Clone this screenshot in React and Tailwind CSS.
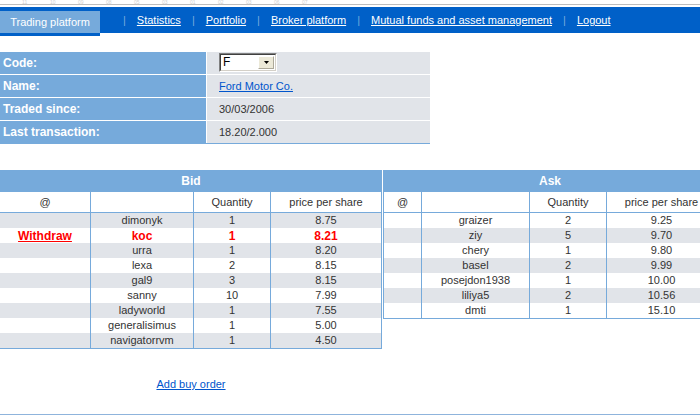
import React from "react";

const BLUE = "bg-[#0060c8]";

const navLinks = ["Statistics", "Portfolio", "Broker platform", "Mutual funds and asset management", "Logout"];

const ruler = ["11", "10", "09", "08", "05", "03", "01", "02", "03", "06", "07"];

const bids = [
  { user: "dimonyk", qty: "1", price: "8.75" },
  { user: "koc", qty: "1", price: "8.21", mine: true },
  { user: "urra", qty: "1", price: "8.20" },
  { user: "lexa", qty: "2", price: "8.15" },
  { user: "gal9", qty: "3", price: "8.15" },
  { user: "sanny", qty: "10", price: "7.99" },
  { user: "ladyworld", qty: "1", price: "7.55" },
  { user: "generalisimus", qty: "1", price: "5.00" },
  { user: "navigatorrvm", qty: "1", price: "4.50" },
];

const asks = [
  { user: "graizer", qty: "2", price: "9.25" },
  { user: "ziy", qty: "5", price: "9.70" },
  { user: "chery", qty: "1", price: "9.80" },
  { user: "basel", qty: "2", price: "9.99" },
  { user: "posejdon1938", qty: "1", price: "10.00" },
  { user: "liliya5", qty: "2", price: "10.56" },
  { user: "dmti", qty: "1", price: "15.10" },
];

function InfoRow({ label, children, last }) {
  return (
    <div className={`flex h-[22px] ${last ? "" : "mb-px"}`}>
      <div className="w-[206px] bg-[#76aadb] pl-[3px] flex items-center text-[12px] font-bold text-white">
        {label}
      </div>
      <div className="w-[223px] ml-px bg-[#e1e4e9] pl-[12px] flex items-center text-[11px] text-[#333]">
        {children}
      </div>
    </div>
  );
}

function CodeSelect() {
  return (
    <div className="w-[58px] h-[19px] -mt-[2px] border border-t-[#808080] border-l-[#808080] border-b-[#fff] border-r-[#fff]">
      <div className="h-full border border-t-[#404040] border-l-[#404040] border-b-[#d4d0c8] border-r-[#d4d0c8] bg-white flex items-center">
        <span className="pl-[2px] flex-1 text-[12px] text-black">F</span>
        <div className="w-[16px] h-[13px] mr-px bg-[#ece9d8] border border-t-white border-l-white border-b-[#aca899] border-r-[#aca899] flex items-center justify-center">
          <svg width="5" height="3" viewBox="0 0 5 3">
            <path d="M0 0h5L2.5 3z" fill="#000" />
          </svg>
        </div>
      </div>
    </div>
  );
}

function OrderTable({ title, rows, cols, firstGray, withBorderL }) {
  const total = cols.reduce((a, b) => a + b, 0) + (withBorderL ? 1 : 0);
  return (
    <div className="flex flex-col">
      <div className="h-[22px] bg-[#76aadb] flex items-center justify-center text-[12px] font-bold text-white" style={{ width: total }}>
        {title}
      </div>
      <div className={withBorderL ? "border-l border-b border-[#76aadb]" : "border-b border-[#76aadb]"}>
        <div className="flex h-[21px] border-b border-[#76aadb] text-[11px] text-[#333]">
          {["@", "", "Quantity", "price per share"].map((h, i) => (
            <div key={i} className="border-r border-[#76aadb] flex items-center justify-center shrink-0 whitespace-nowrap" style={{ width: cols[i] }}>
              {h}
            </div>
          ))}
        </div>
        {rows.map((r, idx) => {
          const gray = firstGray ? idx % 2 === 0 : idx % 2 === 1;
          const txt = r.mine ? "text-[#f00] font-bold text-[12px]" : "text-[#333] text-[11px]";
          return (
            <div key={idx} className={`flex h-[15px] ${gray ? "bg-[#e1e4e9]" : "bg-white"} ${txt}`}>
              <div className="border-r border-[#76aadb] flex items-center justify-center shrink-0" style={{ width: cols[0] }}>
                {r.mine && <a href="#" className="underline">Withdraw</a>}
              </div>
              <div className="border-r border-[#76aadb] flex items-center justify-center shrink-0" style={{ width: cols[1] }}>{r.user}</div>
              <div className="border-r border-[#76aadb] flex items-center justify-center shrink-0" style={{ width: cols[2] }}>{r.qty}</div>
              <div className="border-r border-[#76aadb] flex items-center justify-center shrink-0" style={{ width: cols[3] }}>{r.price}</div>
            </div>
          );
        })}
      </div>
    </div>
  );
}

export default function App() {
  return (
    <div className="w-[700px] h-[420px] overflow-hidden bg-white font-['Liberation_Sans',Arial,sans-serif]">
      {/* faint ruler above the bar */}
      <div className="h-[4px] flex items-end pl-[22px] text-[5px] leading-[4px] text-[#d0d0d0]">
        {ruler.map((n, i) => (
          <span key={i} className="w-[28px]">{n}</span>
        ))}
      </div>
      <div className="h-px bg-[#bdbdbd]" />
      <div className="h-[2px]" />

      {/* nav */}
      <div className={`h-[26px] ${BLUE} flex items-start`}>
        <div className="mt-[4px] w-[100px] h-[25px] bg-[#76aadb] border-b-[3px] border-[#0060c8] flex items-center justify-center text-[11px] text-white">
          Trading platform
        </div>
        <div className="flex items-center h-[26px] ml-[23px] text-[11px] text-white">
          {navLinks.map((l) => (
            <React.Fragment key={l}>
              <span className="text-[#76aadb]">|</span>
              <a href="#" className="underline mx-[11px] whitespace-nowrap">{l}</a>
            </React.Fragment>
          ))}
        </div>
      </div>

      {/* info */}
      <div className="mt-[19px] w-[430px] border-b border-[#76aadb]">
        <InfoRow label="Code:"><CodeSelect /></InfoRow>
        <InfoRow label="Name:"><a href="#" className="underline text-[#0055cc]">Ford Motor Co.</a></InfoRow>
        <InfoRow label="Traded since:">30/03/2006</InfoRow>
        <InfoRow label="Last transaction:" last>18.20/2.000</InfoRow>
      </div>

      {/* order book */}
      <div className="mt-[26px] flex items-start">
        <div className="flex flex-col">
          <OrderTable title="Bid" rows={bids} cols={[91, 103, 77, 111]} firstGray />
          <div className="mt-[27px] text-center text-[11px]">
            <a href="#" className="underline text-[#0055cc]">Add buy order</a>
          </div>
        </div>
        <div className="ml-px shrink-0">
          <OrderTable title="Ask" rows={asks} cols={[38, 108, 77, 110]} withBorderL />
        </div>
      </div>

      <div className="mt-[21px] h-px bg-[#8fb4dc]" />
    </div>
  );
}
